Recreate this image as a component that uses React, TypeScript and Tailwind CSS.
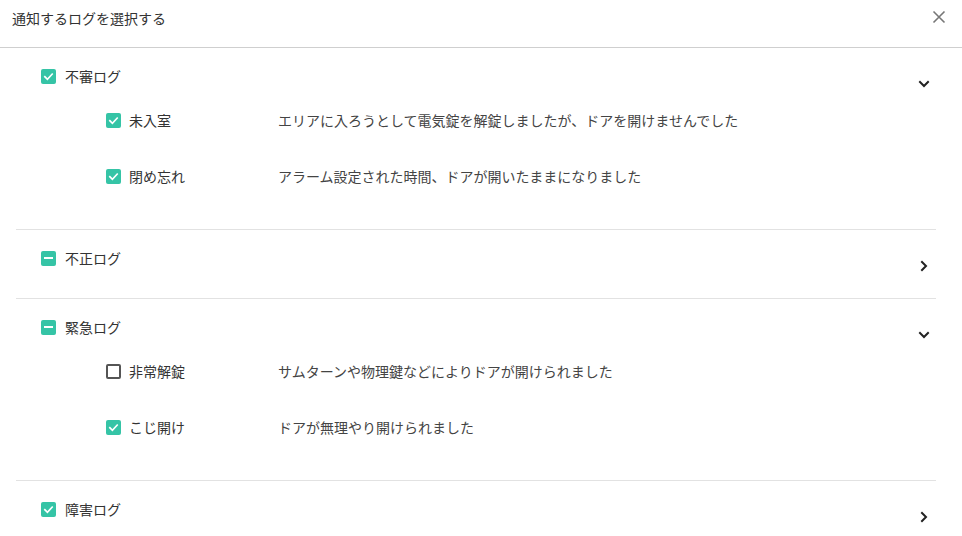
import { useState } from "react";

type State = "checked" | "indeterminate" | "unchecked";

type Child = { label: string; desc: string; checked: boolean };
type Group = { label: string; state: State; open: boolean; children: Child[] };

const groups: Group[] = [
  {
    label: "不審ログ",
    state: "checked",
    open: true,
    children: [
      { label: "未入室", desc: "エリアに入ろうとして電気錠を解錠しましたが、ドアを開けませんでした", checked: true },
      { label: "閉め忘れ", desc: "アラーム設定された時間、ドアが開いたままになりました", checked: true },
    ],
  },
  { label: "不正ログ", state: "indeterminate", open: false, children: [] },
  {
    label: "緊急ログ",
    state: "indeterminate",
    open: true,
    children: [
      { label: "非常解錠", desc: "サムターンや物理鍵などによりドアが開けられました", checked: false },
      { label: "こじ開け", desc: "ドアが無理やり開けられました", checked: true },
    ],
  },
  { label: "障害ログ", state: "checked", open: false, children: [] },
];

function Checkbox({ state }: { state: State }) {
  if (state === "unchecked") {
    return <span className="w-[15px] h-[15px] shrink-0 rounded-[2px] border-2 border-[#555] bg-white" />;
  }
  return (
    <span className="w-[15px] h-[15px] shrink-0 rounded-[2px] bg-[#35c4a6] flex items-center justify-center">
      {state === "checked" ? (
        <svg width="11" height="11" viewBox="0 0 12 12" fill="none">
          <path d="M2 6.2 L4.8 9 L10 3.4" stroke="#fff" strokeWidth="1.8" strokeLinecap="square" />
        </svg>
      ) : (
        <span className="w-[9px] h-[2px] bg-white" />
      )}
    </span>
  );
}

function Chevron({ open }: { open: boolean }) {
  return (
    <svg width="16" height="16" viewBox="0 0 16 16" fill="none" className="shrink-0">
      <path
        d={open ? "M4 6 L8 10 L12 6" : "M6 4 L10 8 L6 12"}
        stroke="#222"
        strokeWidth="2"
        strokeLinecap="square"
      />
    </svg>
  );
}

export default function App() {
  const [items] = useState(groups);

  return (
    <div
      className="w-[962px] h-[536px] bg-white overflow-hidden text-[#333]"
      style={{ fontFamily: '"Noto Sans CJK JP", "Noto Sans", sans-serif' }}
    >
      {/* Header */}
      <div className="h-[48px] border-b border-[#cfcfcf] flex items-center justify-between pl-3 pr-4 pb-[12px]">
        <span className="text-[14px] leading-4 text-[#333]">通知するログを選択する</span>
        <svg width="14" height="14" viewBox="0 0 14 14" fill="none" className="mt-[-1px]">
          <path d="M1.5 1.5 L12.5 12.5 M12.5 1.5 L1.5 12.5" stroke="#777" strokeWidth="1.6" />
        </svg>
      </div>

      {/* Groups */}
      <div className="ml-4 mr-[26px]">
        {items.map((g, i) => (
          <div
            key={g.label}
            className={`pt-5 pb-6 ${i < items.length - 1 ? "border-b border-[#e2e2e2]" : ""}`}
          >
            <div className="flex items-start justify-between pl-[25px] pr-1">
              <div className="flex items-center gap-[9px] h-4">
                <Checkbox state={g.state} />
                <span className="text-[14px] leading-4">{g.label}</span>
              </div>
              <div className="mt-2">
                <Chevron open={g.open} />
              </div>
            </div>
            {g.open && (
              <div className="pb-px">
                {g.children.map((c) => (
                  <div key={c.label} className="h-[56px] flex items-center pl-[90px]">
                    <Checkbox state={c.checked ? "checked" : "unchecked"} />
                    <span className="ml-2 w-[149px] text-[14px] leading-4">{c.label}</span>
                    <span className="text-[14px] leading-4 text-[#444]">{c.desc}</span>
                  </div>
                ))}
              </div>
            )}
          </div>
        ))}
      </div>
    </div>
  );
}
